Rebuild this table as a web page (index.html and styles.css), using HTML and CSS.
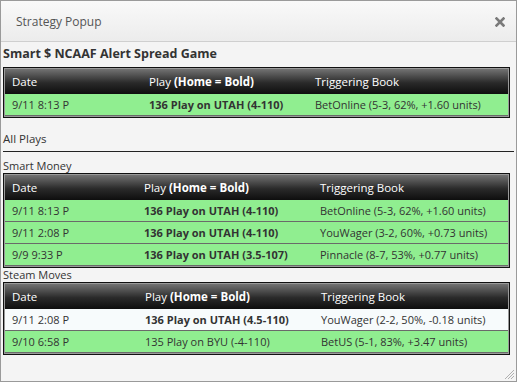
FILE: index.html
```html
<!DOCTYPE html>
<html lang="en">
<head>
    <meta charset="UTF-8">
    <title>Strategy Popup</title>
    <link rel="stylesheet" href="styles.css">
</head>
<body>
    <div class="popup">
        <div class="popup-title">
            <span>Strategy Popup</span>
            <svg class="close" width="10" height="10" viewBox="0 0 10 10">
                <path d="M1.5 1.5 L8.5 8.5 M8.5 1.5 L1.5 8.5" stroke="#7a7a7a" stroke-width="2.6" stroke-linecap="square"/>
            </svg>
        </div>

        <div class="popup-body">
            <h3 class="game-title">Smart $ NCAAF Alert Spread Game</h3>
            <table class="plays plays-alert">
                <colgroup><col class="c-date"><col class="c-play"><col></colgroup>
                <tr><th>Date</th><th>Play <b>(Home = Bold)</b></th><th>Triggering Book</th></tr>
                <tr class="hit"><td>9/11 8:13 P</td><td><b>136 Play on UTAH (4-110)</b></td><td>BetOnline (5-3, 62%, +1.60 units)</td></tr>
            </table>

            <div class="section-head">All Plays</div>

            <div class="sub-head">Smart Money</div>
            <table class="plays plays-smart">
                <colgroup><col class="c-date"><col class="c-play"><col></colgroup>
                <tr><th>Date</th><th>Play <b>(Home = Bold)</b></th><th>Triggering Book</th></tr>
                <tr class="hit"><td>9/11 8:13 P</td><td><b>136 Play on UTAH (4-110)</b></td><td>BetOnline (5-3, 62%, +1.60 units)</td></tr>
                <tr class="hit"><td>9/11 2:08 P</td><td><b>136 Play on UTAH (4-110)</b></td><td>YouWager (3-2, 60%, +0.73 units)</td></tr>
                <tr class="hit"><td>9/9 9:33 P</td><td><b>136 Play on UTAH (3.5-107)</b></td><td>Pinnacle (8-7, 53%, +0.77 units)</td></tr>
            </table>

            <div class="sub-head">Steam Moves</div>
            <table class="plays plays-steam">
                <colgroup><col class="c-date"><col class="c-play"><col></colgroup>
                <tr><th>Date</th><th>Play <b>(Home = Bold)</b></th><th>Triggering Book</th></tr>
                <tr><td>9/11 2:08 P</td><td><b>136 Play on UTAH (4.5-110)</b></td><td>YouWager (2-2, 50%, -0.18 units)</td></tr>
                <tr class="hit"><td>9/10 6:58 P</td><td>135 Play on BYU (-4-110)</td><td>BetUS (5-1, 83%, +3.47 units)</td></tr>
            </table>
        </div>

        <svg class="grip" width="11" height="11" viewBox="0 0 11 11">
            <path d="M1 10 L10 1 M4 10 L10 4 M7 10 L10 7" stroke="#b0b0b0" stroke-width="1"/>
        </svg>
    </div>
</body>
</html>
```

FILE: styles.css
```css
body {
    margin: 0;
    background: #ffffff;
    font-family: "Open Sans", "Liberation Sans", sans-serif;
    color: #333;
}

.popup {
    position: relative;
    width: 515px;
    height: 380px;
    border: 1px solid #9a9a9a;
    background: #f4f4f4;
    overflow: hidden;
}

.popup-title {
    height: 40px;
    display: flex;
    align-items: center;
    justify-content: space-between;
    padding: 0 11px 0 15px;
    background: linear-gradient(#f9f9f9, #ececec);
    border-bottom: 1px solid #cfcfcf;
    font-size: 12px;
    color: #555;
}

.close {
    display: block;
    margin-top: 2px;
}

.popup-body {
    padding: 3px 2px 0 2px;
}

.game-title {
    margin: 0 0 4px 0;
    font-size: 12.5px;
    font-weight: 700;
    line-height: 18px;
    color: #333;
}

.plays {
    width: 507px;
    border-collapse: separate;
    border-spacing: 0;
    border: 1px solid #111;
    padding: 1px;
    background: #9a9a9a;
    table-layout: fixed;
    font-size: 11px;
}

.plays th {
    height: 25px;
    padding: 0 7px;
    text-align: left;
    font-weight: 400;
    font-size: 11.5px;
    color: #fff;
    background: linear-gradient(#727272, #2a2a2a 55%, #0e0e0e);
}

.plays th b {
    font-weight: 700;
}

.plays td {
    height: 21px;
    padding: 0 7px;
    background: #f7fbfc;
    border-bottom: 1px solid #6a6a6a;
    white-space: nowrap;
}

.plays tr.hit td {
    background: #90ee90;
}

.plays td b {
    font-weight: 700;
}

.plays-alert .c-date { width: 137px; }
.plays-alert .c-play { width: 166px; }
.plays-smart .c-date { width: 132px; }
.plays-smart .c-play { width: 176px; }
.plays-steam .c-date { width: 133px; }
.plays-steam .c-play { width: 176px; }

.section-head {
    width: 511px;
    margin: 14px 0 7px 0;
    padding-bottom: 5px;
    border-bottom: 1px solid #222;
    font-size: 11.5px;
    line-height: 14px;
}

.sub-head {
    font-size: 11px;
    line-height: 14px;
}

.grip {
    position: absolute;
    right: 1px;
    bottom: 1px;
}
```
